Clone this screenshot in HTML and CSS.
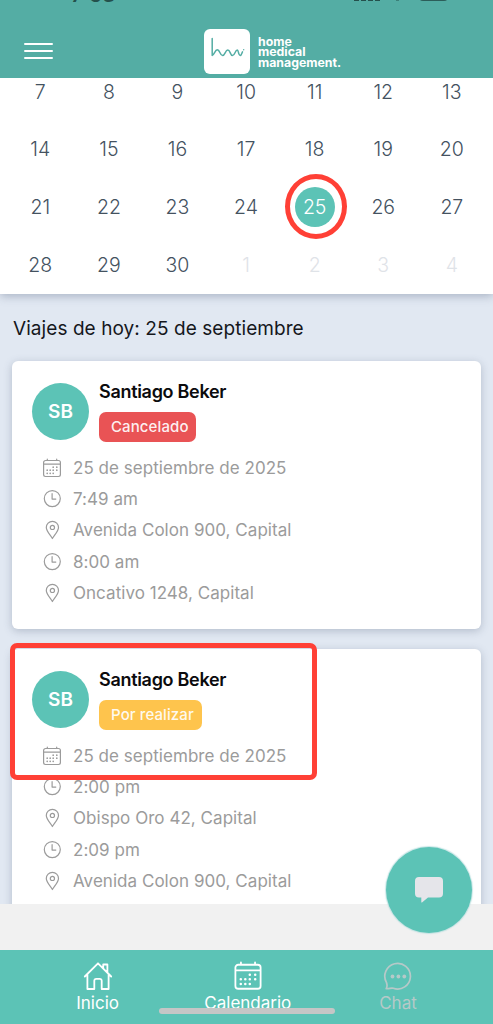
FILE: index.html
```html
<!DOCTYPE html>
<html lang="es">
<head>
<meta charset="utf-8">
<meta name="viewport" content="width=device-width, initial-scale=1">
<title>Calendario</title>
<link rel="stylesheet" href="styles.css">
</head>
<body>
<svg class="sprite" aria-hidden="true">
  <symbol id="calendar" viewBox="0 0 20 20">
    <path d="M3.500 2.500h13a1.900 1.900 0 0 1 1.900 1.900v12.200a1.900 1.900 0 0 1-1.900 1.900H3.500a1.900 1.900 0 0 1-1.900-1.900V4.400A1.900 1.900 0 0 1 3.500 2.500zM1.600 6.200h16.800M5.300 1v1.500M14.700 1v1.500" fill="none" stroke="currentColor" stroke-width="1.200" stroke-linecap="round"/>
    <path d="M11.200 9.200h0M14.800 9.200h0M8.200 12.200h0M5.200 12.200h0M11.200 12.200h0M14.800 12.200h0M5.200 15.300h0M8.200 15.300h0M11.200 15.300h0" fill="none" stroke="currentColor" stroke-width="1.700" stroke-linecap="round"/>
  </symbol>
  <symbol id="clock" viewBox="0 0 20 20">
    <g fill="none" stroke="currentColor" stroke-width="1.200" stroke-linecap="round" stroke-linejoin="round"><circle cx="10.300" cy="9.600" r="8"/><path d="M10.100 4.700v5.400h3.700"/></g>
  </symbol>
  <symbol id="pin" viewBox="0 0 20 20">
    <g fill="none" stroke="currentColor" stroke-width="1.200" stroke-linejoin="round"><path d="M10.400 18.500C8.900 15.700 4.300 11.200 4.300 7.500a6.100 6.100 0 0 1 12.200 0C16.500 11.200 11.900 15.700 10.400 18.500z"/><circle cx="10.400" cy="7.400" r="2.100"/></g>
  </symbol>
</svg>

<header class="header">
  <div class="status"><span class="time">7:53</span><span class="signal"><i></i><i></i><i></i><i></i></span><span class="wifi"></span><span class="battery"></span></div>
  <div class="menu"><i></i><i></i><i></i></div>
  <div class="brand">
    <svg class="logo" viewBox="0 0 46 45"><rect width="46" height="45" rx="6" fill="#fff"/><path d="M8.200 9.500V26.500C10 26.300 11 20.800 13.300 20.800C16 20.800 16 26.600 18.500 26.600C21 26.600 21.300 21 23.800 21C26.300 21 26.200 26.600 28.500 26.600C31 26.600 31 21 33.400 21C34.500 21 34.300 26.400 36.200 26.400C37.500 26.400 37.800 24 38.500 22.800" fill="none" stroke="#54ada4" stroke-width="1.500" stroke-linecap="round" stroke-linejoin="round"/><circle cx="39.700" cy="20.800" r=".7" fill="#54ada4"/></svg>
    <div class="brand-name">home<br>medical<br>management.</div>
  </div>
</header>

<main class="content">
  <section class="month">
    <div class="days">
      <span>7</span><span>8</span><span>9</span><span>10</span><span>11</span><span>12</span><span>13</span>
      <span>14</span><span>15</span><span>16</span><span>17</span><span>18</span><span>19</span><span>20</span>
      <span>21</span><span>22</span><span>23</span><span>24</span><span class="today"><b>25</b></span><span>26</span><span>27</span>
      <span>28</span><span>29</span><span>30</span><span class="other">1</span><span class="other">2</span><span class="other">3</span><span class="other">4</span>
    </div>
  </section>
  <h1 class="title">Viajes de hoy: 25 de septiembre</h1>
  <section class="trips">
    <article class="card">
      <div class="person"><div class="avatar">SB</div><div><h2 class="name">Santiago Beker</h2><span class="badge cancelled">Cancelado</span></div></div>
      <ul class="details">
        <li><svg><use href="#calendar"/></svg><span>25 de septiembre de 2025</span></li>
        <li><svg><use href="#clock"/></svg><span>7:49 am</span></li>
        <li><svg><use href="#pin"/></svg><span>Avenida Colon 900, Capital</span></li>
        <li><svg><use href="#clock"/></svg><span>8:00 am</span></li>
        <li><svg><use href="#pin"/></svg><span>Oncativo 1248, Capital</span></li>
      </ul>
    </article>
    <article class="card marked">
      <div class="person"><div class="avatar">SB</div><div><h2 class="name">Santiago Beker</h2><span class="badge pending">Por realizar</span></div></div>
      <ul class="details">
        <li><svg><use href="#calendar"/></svg><span>25 de septiembre de 2025</span></li>
        <li><svg><use href="#clock"/></svg><span>2:00 pm</span></li>
        <li><svg><use href="#pin"/></svg><span>Obispo Oro 42, Capital</span></li>
        <li><svg><use href="#clock"/></svg><span>2:09 pm</span></li>
        <li><svg><use href="#pin"/></svg><span>Avenida Colon 900, Capital</span></li>
      </ul>
    </article>
  </section>
</main>

<footer class="footer">
  <div class="chat-button"><svg viewBox="0 0 28 26"><path d="M4 0h20a4 4 0 0 1 4 4v12.500a4 4 0 0 1-4 4H13L7.300 25.300Q6.300 26 6.300 24.700V20.500H4a4 4 0 0 1-4-4V4a4 4 0 0 1 4-4z" fill="#e5e5ea"/></svg></div>
  <nav class="tabs">
    <a class="tab"><svg viewBox="0 0 30 30"><path d="M1.800 15.500L15 2.300L28.200 15.500M4.400 13V28H11.300V19.800a2 2 0 0 1 2-2h3.400a2 2 0 0 1 2 2V28h6.900V13M20.200 7.200V3.500h4.200v8" fill="none" stroke="currentColor" stroke-width="1.800" stroke-linecap="round" stroke-linejoin="round"/></svg><span>Inicio</span></a>
    <a class="tab"><svg><use href="#calendar"/></svg><span>Calendario</span></a>
    <a class="tab muted"><svg viewBox="0 0 30 30"><path d="M3.200 27.600C4.600 25.400 4.200 23.600 3.500 21.600A12.800 12.800 0 1 1 10.300 27.300C8.200 26.500 6 28.100 3.200 27.600z" fill="none" stroke="currentColor" stroke-width="1.700" stroke-linejoin="round"/><g fill="currentColor"><circle cx="9.500" cy="15.500" r="1.900"/><circle cx="15.400" cy="15.500" r="1.900"/><circle cx="21.300" cy="15.500" r="1.900"/></g></svg><span>Chat</span></a>
  </nav>
  <div class="home-indicator"></div>
</footer>
</body>
</html>
```

FILE: styles.css
```css
*, *::before, *::after { box-sizing: border-box; }
body {
  margin: 0;
  width: 493px;
  height: 1024px;
  display: flex;
  flex-direction: column;
  overflow: hidden;
  background: #f1f1f1;
  font-family: Inter, "Liberation Sans", sans-serif;
}
.sprite { position: absolute; width: 0; height: 0; }

.header {
  position: relative;
  flex: 0 0 78px;
  padding: 29px 24px 0;
  display: flex;
  background: #54ada4;
  overflow: hidden;
}
.status { position: absolute; inset: 0 0 auto; height: 3px; overflow: hidden; color: #24504c; }
.time { position: absolute; left: 71px; bottom: -4px; font-size: 21px; line-height: 24px; font-weight: 600; }
.signal { position: absolute; left: 354px; top: 0; display: flex; gap: 2px; }
.signal i { width: 5px; height: 1px; background: #24504c; }
.wifi { position: absolute; left: 396px; top: 0; width: 3px; height: 1px; background: #3b8079; }
.battery { position: absolute; left: 419px; top: -8px; width: 29px; height: 9px; border-radius: 4px; background: #2c5d59; }
.menu { display: flex; flex-direction: column; gap: 5px; padding-top: 13.500px; width: 180px; }
.menu i { width: 29px; height: 2.300px; border-radius: 1px; background: #fff; }
.brand { display: flex; gap: 8px; }
.logo { width: 46px; height: 45px; }
.brand-name { padding-top: 7.500px; color: #fff; font-size: 12.300px; font-weight: 700; line-height: 10.700px; letter-spacing: 0; }

.content { flex: 0 0 825.500px; overflow: hidden; background: #e1e8f2; }
.month { height: 215.500px; padding: 0 6px; overflow: hidden; background: #fff; clip-path: inset(0 0 -20px); box-shadow: 0 2px 9px rgba(60, 75, 105, .35); }
.days {
  display: grid;
  grid-template-columns: repeat(7, 68.600px);
  grid-auto-rows: 57.600px;
  margin-top: -15px;
  color: #44525f;
  font-size: 19.500px;
  font-weight: 300;
}
.days span { display: flex; align-items: center; justify-content: center; }
.days .other { color: #dfe3e8; }
.today { position: relative; }
.today b { width: 40px; height: 40px; border-radius: 50%; background: #5cc3b6; color: #fff; font-weight: 300; display: flex; align-items: center; justify-content: center; }
.today::after { content: ""; position: absolute; left: 4.500px; top: -4px; width: 62px; height: 65px; border: 5px solid #ff4036; border-radius: 50%; }

.title { margin: 0; padding: 23.500px 13px 0; height: 67.500px; font-size: 19px; letter-spacing: .07px; line-height: 24px; font-weight: 400; color: #15171c; white-space: nowrap; }
.trips { padding: 0 12px; display: flex; flex-direction: column; gap: 20.500px; }
.card { height: 267.500px; padding: 20px; border-radius: 6px; background: #fff; box-shadow: 0 2px 9px rgba(60, 75, 105, .28); white-space: nowrap; }
.person { display: flex; gap: 10px; height: 71px; }
.avatar { width: 57px; height: 57px; margin-top: 2px; border-radius: 50%; background: #5cc3b6; color: #fff; font-size: 19px; font-weight: 600; display: flex; align-items: center; justify-content: center; }
.name { margin: 0; font-size: 18px; letter-spacing: -.3px; line-height: 22px; font-weight: 600; color: #0b0b0d; }
.badge { display: block; height: 30px; margin-top: 9px; padding-left: 12px; border-radius: 7px; color: rgba(255, 255, 255, .93); font-size: 15px; letter-spacing: .1px; line-height: 29px; font-weight: 500; }
.cancelled { background: #e95355; width: 97px; }
.pending { background: #fec44d; width: 103px; }
.details { list-style: none; margin: 0; padding: 0 0 0 10px; color: #9b9b9b; font-size: 17px; letter-spacing: .04px; }
.details li { display: flex; align-items: center; gap: 11px; height: 31.350px; }
.details svg { width: 20px; height: 20px; }
.marked { position: relative; }
.marked::after { content: ""; position: absolute; left: -2px; top: -6px; width: 307px; height: 137px; border: 5px solid #ff4036; border-radius: 7px; }

.footer { position: relative; flex: 1; padding-top: 46.500px; background: #f1f1f1; }
.chat-button { position: absolute; left: 386px; top: -57px; width: 86px; height: 86px; border-radius: 50%; background: #5cc3b6; box-shadow: 0 0 1px 1px rgba(180, 222, 222, .75); }
.chat-button svg { position: absolute; left: 29px; top: 30px; width: 28px; height: 26px; }
.tabs { height: 75px; padding: 10.500px 21px 0 22.500px; display: grid; grid-template-columns: repeat(3, 150.200px); background: #5cc3b6; }
.tab { display: flex; flex-direction: column; align-items: center; color: #fff; font-size: 17px; line-height: 22px; }
.tab svg { width: 30px; height: 30px; }
.tab span { margin-top: 1.500px; }
.tab.muted { color: #b6c9c8; }
.home-indicator { position: absolute; left: 159px; top: 104px; width: 176px; height: 6px; border-radius: 3px; background: #c5c6c6; }
```
